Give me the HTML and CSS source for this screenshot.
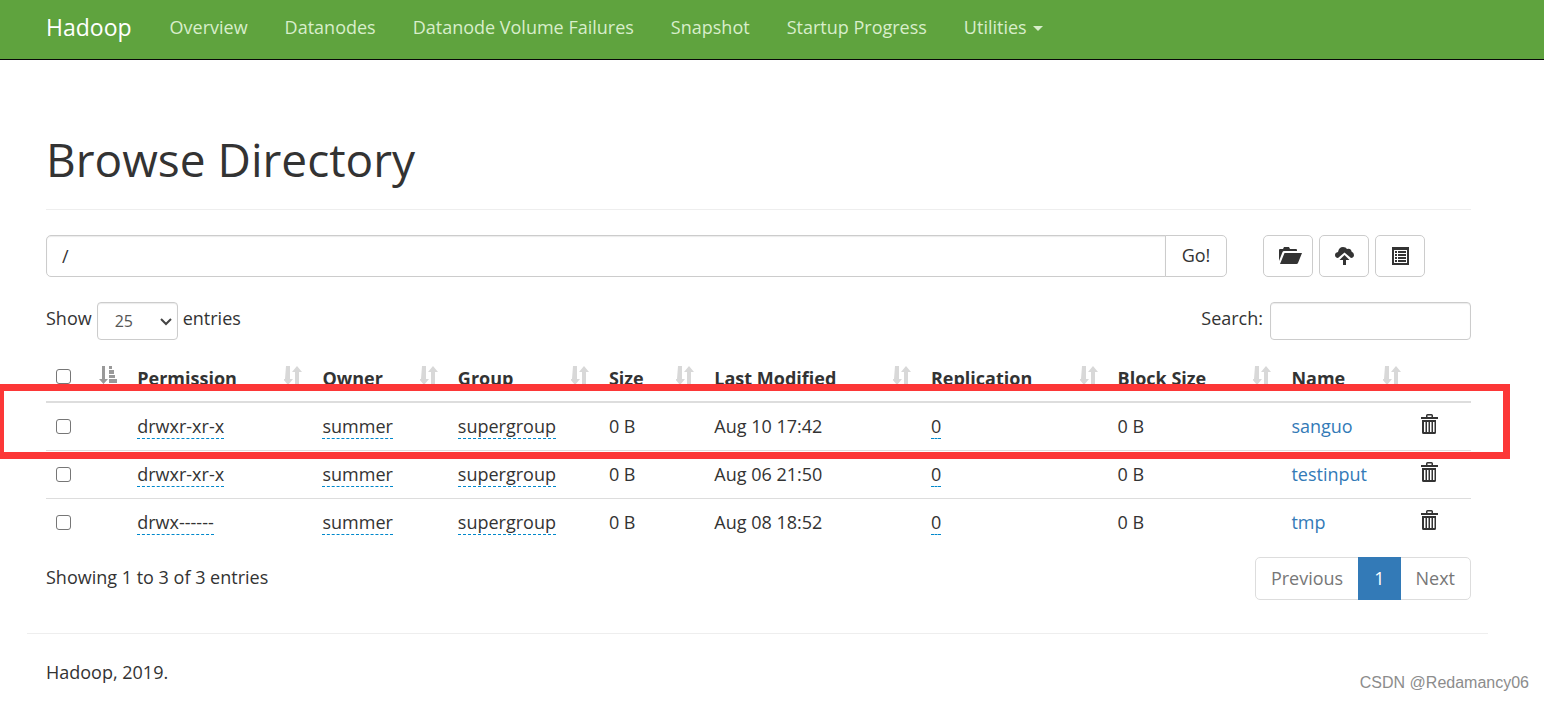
FILE: index.html
```html
<!DOCTYPE html>
<html lang="en">
<head>
<meta charset="utf-8">
<title>Browsing HDFS</title>
<link rel="stylesheet" href="styles.css">
</head>
<body>
<svg class="sprite" aria-hidden="true">
  <symbol id="sort" viewBox="0 0 18 19"><path d="M2 0h4v13h3l-5 6-5-6h2zM11 19V6H8l5-6 5 6h-3v13z"/></symbol>
  <symbol id="sort-asc" viewBox="0 0 18 19"><path d="M3 0h3v13h3l-4.500 5L0 13h3zM10 0h3v3h-3zM10 4h5v4h-5zM10 9h6v3h-6zM10 13h8v4h-8z"/></symbol>
  <symbol id="trash" viewBox="0 0 18 20"><path fill-rule="evenodd" d="M5 3V1.500Q5 0 6.500 0h4Q12 0 12 1.500V3h5v2H0V3zM6.500 3h4V1.500h-4zM1 6h14v12.500q0 1.500-1.500 1.500h-11Q1 20 1 18.500zM3 8v10h1.500V8zM6 8v10h1.500V8zM9 8v10h1.500V8zM12 8v10h1.500V8z"/></symbol>
</svg>

<header class="navbar">
  <a class="brand" href="#">Hadoop</a>
  <nav class="nav">
    <a href="#">Overview</a>
    <a href="#">Datanodes</a>
    <a href="#">Datanode Volume Failures</a>
    <a href="#">Snapshot</a>
    <a href="#">Startup Progress</a>
    <a href="#">Utilities <span class="caret"></span></a>
  </nav>
</header>

<main class="container">
  <h1>Browse Directory</h1>

  <div class="toolbar">
    <form class="path">
      <input type="text" value="/" aria-label="Directory">
      <button type="button">Go!</button>
    </form>
    <div class="actions">
      <button type="button" aria-label="Create directory"><svg width="27" height="18" viewBox="-4 0 27 18"><path d="M0 14V3q0-1 1-1h3l1-2h5l1 2h6q1 0 1 1v1H5q-1 0-1.500 1zM5.500 6H23l-4 10q-.5 1-1.500 1H1z"/></svg></button>
      <button type="button" aria-label="Upload files"><svg width="19" height="18" viewBox="0 0 19 18"><path d="M3 11Q0 10.500 0 8 0 5.500 3 5 4 0 8 0q3 0 4 2 4-1 4.500 2.500Q19 5.500 19 8q0 2.500-3 3L9.500 5.500 3 11zM9.500 8l5 5H11v5H8v-5H4.500z"/></svg></button>
      <button type="button" aria-label="Cut and paste"><svg width="17" height="18" viewBox="0 0 17 18"><path fill-rule="evenodd" d="M0 0h17v18H0zM2 3v13h13V3zM3 4h2v2H3zM6 4h8v2H6zM3 7h2v2H3zM6 7h8v2H6zM3 10h2v2H3zM6 10h8v2H6zM3 13h2v2H3zM6 13h8v2H6z"/></svg></button>
    </div>
  </div>

  <div class="filters">
    <div class="field">
      <label for="length">Show</label>
      <span class="select"><select id="length"><option>25</option></select><svg width="12" height="8" viewBox="0 0 12 8"><path d="M1 1l5 5 5-5"/></svg></span>
      <span>entries</span>
    </div>
    <div class="field search">
      <label for="search">Search:</label>
      <input id="search" type="search">
    </div>
  </div>

  <div class="listing">
    <table>
      <colgroup><col class="c-check"><col class="c-perm"><col class="c-owner"><col class="c-group"><col class="c-size"><col class="c-date"><col class="c-repl"><col class="c-block"><col class="c-name"><col class="c-trash"></colgroup>
      <thead>
        <tr>
          <th><div class="head"><input type="checkbox" aria-label="Select all"><svg class="sorted"><use href="#sort-asc"/></svg></div></th>
          <th><div class="head">Permission<svg><use href="#sort"/></svg></div></th>
          <th><div class="head">Owner<svg><use href="#sort"/></svg></div></th>
          <th><div class="head">Group<svg><use href="#sort"/></svg></div></th>
          <th><div class="head">Size<svg><use href="#sort"/></svg></div></th>
          <th><div class="head">Last Modified<svg><use href="#sort"/></svg></div></th>
          <th><div class="head">Replication<svg><use href="#sort"/></svg></div></th>
          <th><div class="head">Block Size<svg><use href="#sort"/></svg></div></th>
          <th><div class="head">Name<svg><use href="#sort"/></svg></div></th>
          <th></th>
        </tr>
      </thead>
      <tbody>
        <tr>
          <td><input type="checkbox" aria-label="Select sanguo"></td>
          <td><span class="edit">drwxr-xr-x</span></td><td><span class="edit">summer</span></td><td><span class="edit">supergroup</span></td>
          <td>0 B</td><td>Aug 10 17:42</td><td><span class="edit">0</span></td><td>0 B</td>
          <td><a href="#">sanguo</a></td>
          <td><button type="button" class="trash" aria-label="Delete sanguo"><svg><use href="#trash"/></svg></button></td>
        </tr>
        <tr>
          <td><input type="checkbox" aria-label="Select testinput"></td>
          <td><span class="edit">drwxr-xr-x</span></td><td><span class="edit">summer</span></td><td><span class="edit">supergroup</span></td>
          <td>0 B</td><td>Aug 06 21:50</td><td><span class="edit">0</span></td><td>0 B</td>
          <td><a href="#">testinput</a></td>
          <td><button type="button" class="trash" aria-label="Delete testinput"><svg><use href="#trash"/></svg></button></td>
        </tr>
        <tr>
          <td><input type="checkbox" aria-label="Select tmp"></td>
          <td><span class="edit">drwx------</span></td><td><span class="edit">summer</span></td><td><span class="edit">supergroup</span></td>
          <td>0 B</td><td>Aug 08 18:52</td><td><span class="edit">0</span></td><td>0 B</td>
          <td><a href="#">tmp</a></td>
          <td><button type="button" class="trash" aria-label="Delete tmp"><svg><use href="#trash"/></svg></button></td>
        </tr>
      </tbody>
    </table>
    <div class="marker"></div>
  </div>

  <div class="summary">
    <div>Showing 1 to 3 of 3 entries</div>
    <nav class="pages"><a href="#">Previous</a><a href="#" class="current">1</a><a href="#">Next</a></nav>
  </div>
</main>

<footer class="footer">Hadoop, 2019.</footer>
<div class="watermark">CSDN @Redamancy06</div>
</body>
</html>
```

FILE: styles.css
```css
* { box-sizing: border-box; }

body {
  position: relative;
  margin: 0;
  overflow-x: hidden;
  background: #fff;
  color: #333;
  font: 18px/26px "Open Sans", "Noto Sans", sans-serif;
}

input, button, select { margin: 0; font: inherit; color: inherit; }
a { color: #337ab7; text-decoration: none; }
svg { fill: currentColor; }
.sprite { display: none; }

.navbar {
  display: flex;
  align-items: center;
  height: 60px;
  padding: 0 46px 6px;
  background: #5fa33e;
  border-bottom: 1px solid #080808;
}
.brand { margin-right: 38px; color: #fff; font-size: 23px; }
.nav { display: flex; gap: 37px; }
.nav a { color: #d8eecb; white-space: nowrap; }
.caret {
  display: inline-block;
  margin-left: 2px;
  border: 5px solid transparent;
  border-top-color: currentColor;
  border-bottom: 0;
  vertical-align: middle;
}

.container { margin: 0 73px 0 46px; }

h1 {
  margin: 67px 0 25px;
  padding-bottom: 18px;
  border-bottom: 1px solid #eee;
  font-size: 46px;
  font-weight: 400;
  line-height: 64px;
}

.toolbar { display: flex; gap: 36px; margin-right: 46px; }
.path { display: flex; flex: 1; }
.path input {
  flex: 1;
  min-width: 0;
  height: 42px;
  padding: 0 15px;
  border: 1px solid #ccc;
  border-radius: 5px 0 0 5px;
  box-shadow: inset 0 1px 1px rgba(0, 0, 0, .08);
}
.path button {
  width: 62px;
  margin-left: -1px;
  padding: 0 0 2px;
  background: #fff;
  border: 1px solid #ccc;
  border-radius: 0 5px 5px 0;
}
.actions { display: flex; gap: 6px; }
.actions button {
  display: flex;
  align-items: center;
  justify-content: center;
  width: 50px;
  padding: 0;
  background: #fff;
  border: 1px solid #ccc;
  border-radius: 5px;
}

.filters { display: flex; justify-content: space-between; margin-top: 25px; }
.field { display: flex; gap: 5px; line-height: 32px; }
.select { position: relative; display: flex; }
.field select, .field input {
  height: 38px;
  background: #fff;
  border: 1px solid #ccc;
  border-radius: 4px;
  box-shadow: inset 0 1px 1px rgba(0, 0, 0, .08);
}
.field select { width: 81px; padding: 0 17px; color: #555; font-size: 16px; appearance: none; }
.select svg { position: absolute; top: 16px; right: 6px; fill: none; stroke: #444; stroke-width: 2; pointer-events: none; }
.search { gap: 7px; }
.search input { width: 201px; padding: 0 13px; }

.listing { position: relative; margin-top: 12px; }
table { width: 100%; border-collapse: collapse; table-layout: fixed; }
.c-check { width: 5.7%; }
.c-perm { width: 13%; }
.c-owner { width: 9.5%; }
.c-group { width: 10.6%; }
.c-size { width: 7.4%; }
.c-date { width: 15.2%; }
.c-repl { width: 13.1%; }
.c-block { width: 12.2%; }
.c-name { width: 9.1%; }
.c-trash { width: 4.2%; }
th, td { text-align: left; white-space: nowrap; }
th { padding: 13px 0 10px 10px; font-weight: 700; border-bottom: 2px solid #ddd; }
td { padding: 10px 0 11px 10px; border-top: 1px solid #ddd; }
.head { display: flex; justify-content: space-between; height: 26px; padding-right: 10px; }
.head svg { width: 18px; height: 19px; margin-top: 1px; color: #d8d8d8; }
.head .sorted { color: #999; }
input[type="checkbox"] {
  display: block;
  width: 15px;
  height: 15px;
  background: #fff;
  border: 1px solid #767676;
  border-radius: 3px;
  appearance: none;
}
.head input[type="checkbox"] { margin-top: 4px; }
.edit { border-bottom: 1px dashed #08c; }
.trash { display: block; padding: 0 0 4px; background: none; border: 0; line-height: 0; }
.trash svg { width: 18px; height: 20px; }

/* Frame drawn over the row of the newest directory */
.marker {
  position: absolute;
  top: 32px;
  left: -49px;
  right: -39px;
  height: 75px;
  border: 7px solid #fc3737;
  pointer-events: none;
}

.summary { display: flex; justify-content: space-between; margin-top: 11px; line-height: 41px; }
.pages { display: flex; border: 1px solid #ddd; border-radius: 5px; }
.pages a { padding: 0 15px; color: #777; }
.pages .current { margin: -1px 0; padding: 1px 16px; background: #337ab7; color: #fff; }

.footer { margin: 33px 56px 0 27px; padding: 25px 19px 16px; border-top: 1px solid #eee; }

.watermark {
  position: absolute;
  right: 15px;
  bottom: 6px;
  color: #8c8c8c;
  font: 16px/24px "Liberation Sans", sans-serif;
}
```
